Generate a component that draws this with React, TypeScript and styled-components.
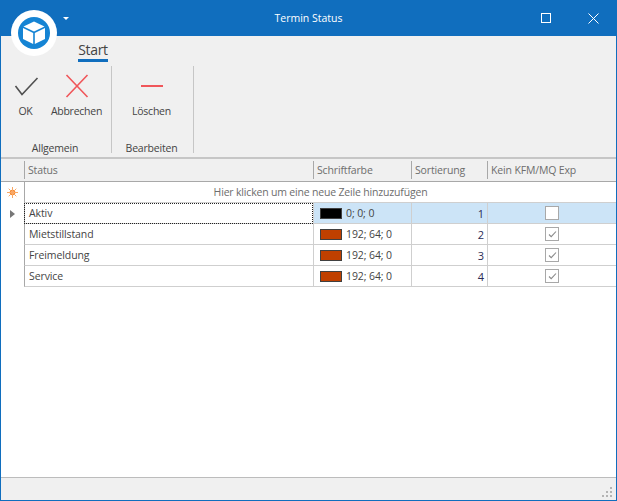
import React from "react";
import styled, { createGlobalStyle } from "styled-components";

const Global = createGlobalStyle`
  html, body { margin: 0; padding: 0; background: #fff; }
  body { font-family: "Open Sans", "Liberation Sans", sans-serif; }
`;

const Win = styled.div`
  width: 617px; height: 501px; box-sizing: border-box;
  display: flex; flex-direction: column; position: relative; overflow: hidden;
  border: solid #106ebe; border-width: 0 1px 1px 1px;
  background: #fff;
`;
const TitleBar = styled.div`
  height: 36px; flex: none; margin: 0 -1px; background: #106ebe; color: #fff;
  display: flex; align-items: center; justify-content: center; position: relative;
  font-size: 10.5px; padding-bottom: 1px; box-sizing: border-box;
`;
const LogoBadge = styled.div`
  position: absolute; left: 10px; top: 10px; width: 46px; height: 46px;
  border-radius: 50%; background: #fff; display: flex; align-items: center; justify-content: center; z-index: 2;
`;
const QuickArrow = styled.div`
  position: absolute; left: 63px; top: 17px; width: 0; height: 0;
  border-left: 3px solid transparent; border-right: 3px solid transparent; border-top: 3px solid #fff;
`;
const WinButtons = styled.div`
  position: absolute; right: 0; top: 0; height: 36px; display: flex;
`;
const WinBtn = styled.div<{ $w: number }>`
  width: ${p => p.$w}px; height: 36px; display: flex; align-items: center; justify-content: center;
`;
const Ribbon = styled.div`
  height: 121px; flex: none; background: #f0f0f0; border-bottom: 2px solid #c6c6c6;
  display: flex; flex-direction: column;
`;
const TabRow = styled.div`
  height: 30px; flex: none; padding-left: 77px; display: flex; align-items: flex-start;
`;
const Tab = styled.div`
  margin-top: 6px; height: 17px; line-height: 15px; font-size: 14px; color: #444; border-bottom: 3px solid #106ebe; width: 30px; text-align: center;
  letter-spacing: -.3px;
`;
const Groups = styled.div`
  display: flex; height: 87px; flex: none;
`;
const Group = styled.div<{ $w: number }>`
  width: ${p => p.$w}px; box-sizing: border-box; border-right: 1px solid #c6c6c6; padding-right: 2px; display: flex; flex-direction: column; align-items: center;
`;
const Buttons = styled.div`
  display: flex; height: 77px; flex: none; align-items: flex-start; align-self: stretch;
`;
const RibbonBtn = styled.div<{ $w: number }>`
  width: ${p => p.$w}px; display: flex; flex-direction: column; align-items: center; font-size: 10.5px; color: #444; white-space: nowrap;
  svg { display: block; margin-top: 7px; }
  span { margin-top: 5px; line-height: 15px; letter-spacing: -.25px; }
`;
const GroupLabel = styled.div`
  font-size: 10.5px; line-height: 10px; color: #444; letter-spacing: -.2px;
`;
const GridArea = styled.div`
  flex: 1; display: flex; flex-direction: column; background: #fff; font-size: 10.5px;
  color: #444;
`;
const Row = styled.div<{ $h: number }>`
  display: grid; grid-template-columns: 23px 289px 98px 76px 1fr;
  height: ${p => p.$h}px; flex: none;
`;
const HeadRow = styled(Row)`
  box-sizing: border-box; border-bottom: 1px solid #a8a8a8; background: #f0f0f0;
`;
const HeadCell = styled.div`
  background: #f0f0f0; color: #6d6d6d; display: flex; align-items: center; padding-left: 4px; letter-spacing: -.15px;
  position: relative; white-space: nowrap; overflow: hidden;
  &:not(:first-child)::before { content: ""; position: absolute; left: 0; top: 2px; bottom: 2px; width: 1px; background: #a8a8a8; }
`;
const NewRow = styled.div`
  grid-column: 2 / 6; display: flex; align-items: center; justify-content: center; color: #6d6d6d; letter-spacing: -.18px;
  border-left: 1px solid #a8a8a8; border-bottom: 1px solid #cfcfcf;
`;
const Indicator = styled.div`
  display: flex; align-items: center; justify-content: center;
`;
const Cell = styled.div<{ $sel?: boolean; $focus?: boolean }>`
  display: flex; align-items: center; padding-left: 3px; box-sizing: border-box; border-left: 1px solid #cfcfcf; border-bottom: 1px solid #cfcfcf; letter-spacing: -.1px; color: #444;
  ${p => p.$focus ? "outline: 1px dotted #222; outline-offset: -1px; background:#fff;" : ""}
  ${p => p.$sel ? "background:#cce4f7;" : ""}
`;
const StatusCell = styled(Cell)`
  border-left: 1px solid #a8a8a8; padding-left: 4px;
`;
const NumCell = styled(Cell)`
  justify-content: flex-end; padding-right: 3px; color: #2b2b55; font-size: 11px;
`;
const CheckCell = styled(Cell)`
  justify-content: center; padding-left: 0;
`;
const Swatch = styled.div<{ $c: string }>`
  width: 22px; height: 11px; box-sizing: border-box; border: 1px solid #404040; background: ${p => p.$c}; margin: 0 4px 0 3px; flex: none;
`;
const CheckBox = styled.div`
  width: 12px; height: 12px; border: 1px solid #a8a8a8; background: #fff; display: flex; align-items: center; justify-content: center;
`;
const Spacer = styled.div`
  flex: 1;
`;
const StatusBar = styled.div`
  height: 20px; flex: none; background: #f0f0f0; border-top: 1px solid #bcbcbc; display: flex; justify-content: flex-end; align-items: flex-end; padding: 0 3px 2px 0;
`;

const data = [
  { name: "Aktiv", color: "#000000", text: "0; 0; 0", n: 1, on: false },
  { name: "Mietstillstand", color: "#c04000", text: "192; 64; 0", n: 2, on: true },
  { name: "Freimeldung", color: "#c04000", text: "192; 64; 0", n: 3, on: true },
  { name: "Service", color: "#c04000", text: "192; 64; 0", n: 4, on: true },
];

export default function App() {
  return (
    <Win>
      <Global />
      <TitleBar>
        Termin Status
        <QuickArrow />
        <WinButtons>
          <WinBtn $w={48}>
            <svg width="11" height="11" viewBox="0 0 11 11"><rect x=".5" y=".5" width="9" height="9" fill="none" stroke="#fff" /></svg>
          </WinBtn>
          <WinBtn $w={47}>
            <svg width="11" height="11" viewBox="0 0 11 11"><path d="M.5.5l10 10M10.5.5l-10 10" stroke="#fff" fill="none" /></svg>
          </WinBtn>
        </WinButtons>
      </TitleBar>
      <LogoBadge>
        <svg width="32" height="32" viewBox="0 0 32 32">
          <circle cx="16" cy="16" r="16" fill="#1584d4" />
          <path d="M16 4.5 L26.5 9.5 L16 14.5 L5.5 9.5 Z" fill="#fff" />
          <path d="M5 11 L15.2 15.9 L15.2 27 L5 22 Z" fill="#fff" />
          <path d="M27 11 L16.8 15.9 L16.8 27 L27 22 Z" fill="#fff" />
        </svg>
      </LogoBadge>
      <Ribbon>
        <TabRow><Tab>Start</Tab></TabRow>
        <Groups>
          <Group $w={111}>
            <Buttons>
              <RibbonBtn $w={49}>
                <svg width="26" height="26" viewBox="0 0 26 26"><path d="M2.5 13 L9 21.5 L24.5 5" fill="none" stroke="#505050" strokeWidth="1.6" /></svg>
                <span>OK</span>
              </RibbonBtn>
              <RibbonBtn $w={53}>
                <svg width="26" height="26" viewBox="0 0 26 26"><path d="M2.5 2 L23.5 24 M23.5 2 L2.5 24" fill="none" stroke="#f0565a" strokeWidth="1.6" /></svg>
                <span>Abbrechen</span>
              </RibbonBtn>
            </Buttons>
            <GroupLabel>Allgemein</GroupLabel>
          </Group>
          <Group $w={82}>
            <Buttons>
              <RibbonBtn $w={79}>
                <svg width="26" height="26" viewBox="0 0 26 26"><path d="M2 13 H24" fill="none" stroke="#f0565a" strokeWidth="2" /></svg>
                <span>Löschen</span>
              </RibbonBtn>
            </Buttons>
            <GroupLabel>Bearbeiten</GroupLabel>
          </Group>
        </Groups>
      </Ribbon>
      <GridArea>
        <HeadRow $h={23}>
          <HeadCell />
          <HeadCell>Status</HeadCell>
          <HeadCell>Schriftfarbe</HeadCell>
          <HeadCell>Sortierung</HeadCell>
          <HeadCell>Kein KFM/MQ Exp</HeadCell>
        </HeadRow>
        <Row $h={21}>
          <Indicator>
            <svg width="11" height="11" viewBox="0 0 11 11">
              <circle cx="5.5" cy="5.5" r="2.8" fill="#f58a32" />
              <path d="M5.5 0v11M0 5.5h11M1.7 1.7l7.6 7.6M9.3 1.7l-7.6 7.6" stroke="#f9a866" strokeWidth="1" />
            </svg>
          </Indicator>
          <NewRow>Hier klicken um eine neue Zeile hinzuzufügen</NewRow>
        </Row>
        {data.map((d, i) => (
          <Row key={d.name} $h={21}>
            <Indicator>
              {i === 0 && (
                <svg width="5" height="8" viewBox="0 0 5 8"><path d="M0 0l5 4-5 4z" fill="#777" /></svg>
              )}
            </Indicator>
            <StatusCell $focus={i === 0}>{d.name}</StatusCell>
            <Cell $sel={i === 0}><Swatch $c={d.color} />{d.text}</Cell>
            <NumCell $sel={i === 0}>{d.n}</NumCell>
            <CheckCell $sel={i === 0}>
              <CheckBox>
                {d.on && (
                  <svg width="9" height="8" viewBox="0 0 9 8"><path d="M1 4.5l2.2 2.2L8 1.5" fill="none" stroke="#8a8a8a" strokeWidth="1.1" /></svg>
                )}
              </CheckBox>
            </CheckCell>
          </Row>
        ))}
        <Spacer />
      </GridArea>
      <StatusBar>
        <svg width="11" height="11" viewBox="0 0 11 11" fill="#b4b4b4">
          <rect x="8" y="0" width="2" height="2" /><rect x="4" y="4" width="2" height="2" /><rect x="8" y="4" width="2" height="2" />
          <rect x="0" y="8" width="2" height="2" /><rect x="4" y="8" width="2" height="2" /><rect x="8" y="8" width="2" height="2" />
        </svg>
      </StatusBar>
    </Win>
  );
}
